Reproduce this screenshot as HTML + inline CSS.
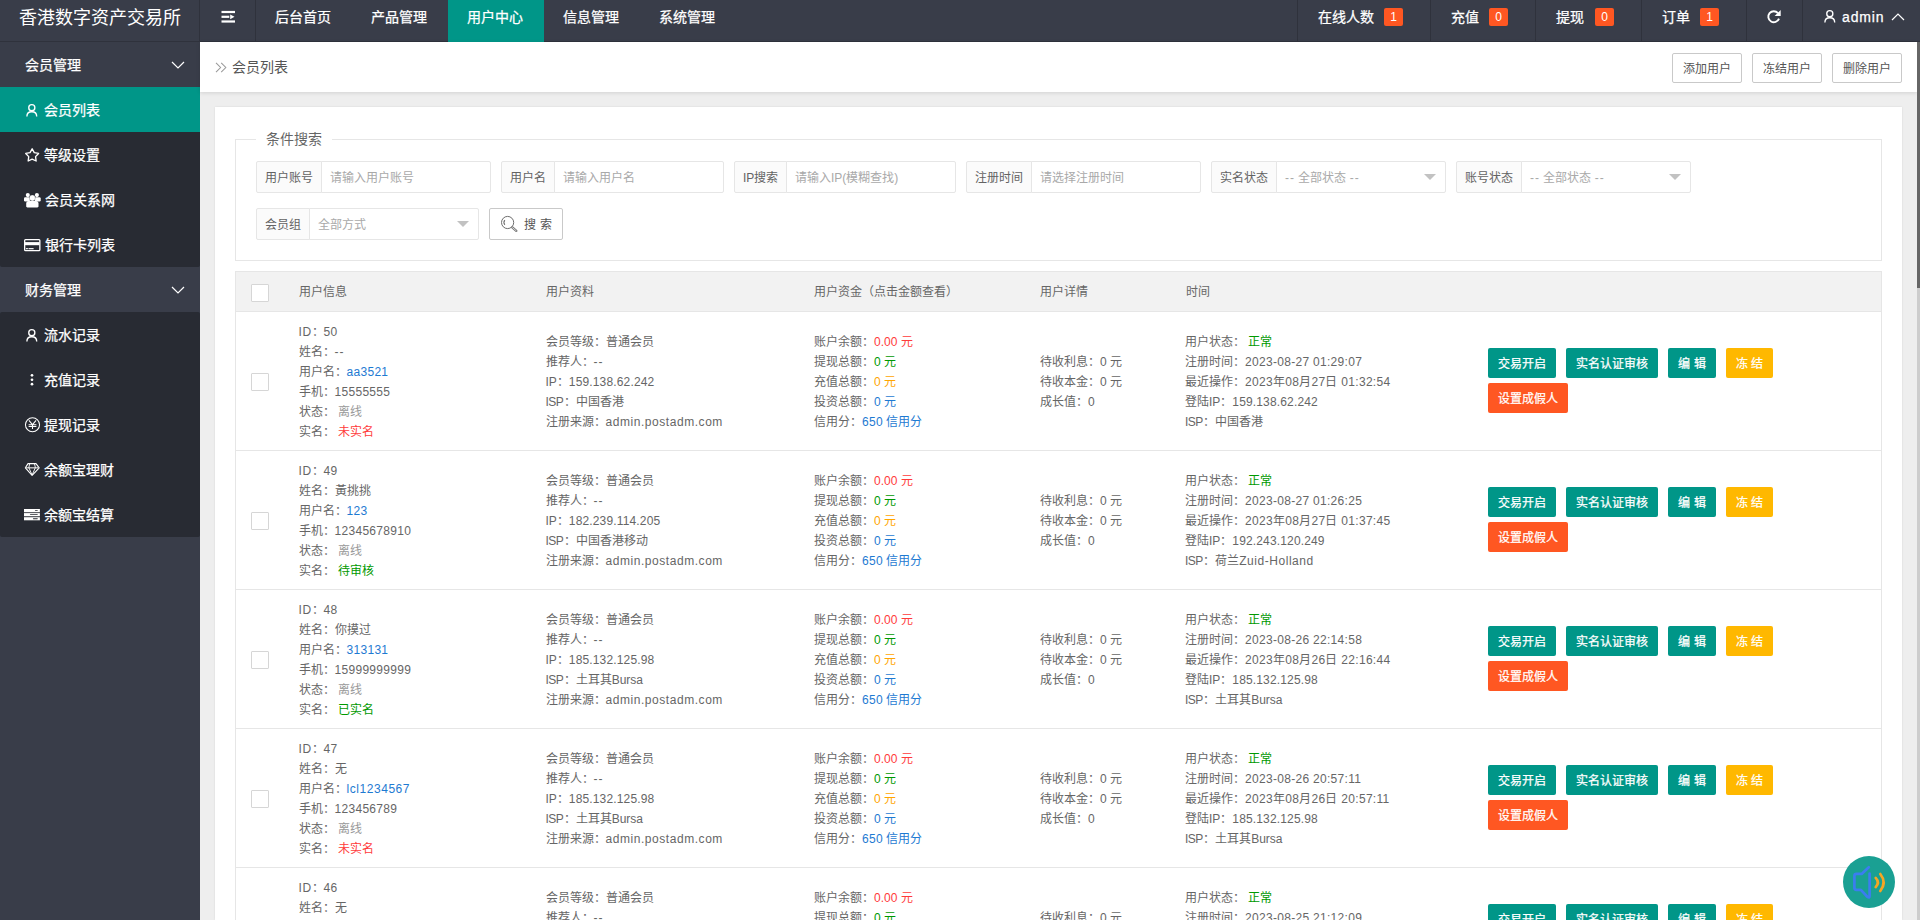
<!DOCTYPE html>
<html lang="zh-CN">
<head>
<meta charset="utf-8">
<title>会员列表</title>
<style>
*{box-sizing:border-box;margin:0;padding:0}
html,body{width:1920px;height:920px;overflow:hidden}
body{font-family:"Liberation Sans",sans-serif;font-size:14px;color:#666;background:#eee;position:relative;line-height:1}
a{text-decoration:none;color:inherit}
.abs,.ic{position:absolute}
.ic{display:block;overflow:visible}
#hd{position:absolute;left:0;top:0;width:1920px;height:42px;background:#393d49;border-bottom:1px solid #2f323c;color:#fff}
#hd .t{position:absolute;top:0;height:41px;line-height:35px;font-size:14px;white-space:nowrap;color:#fff}
#hd .dv{position:absolute;top:0;width:1px;height:41px;background:#2f323c}
#logo{position:absolute;left:0;top:0;width:199px;height:41px;line-height:36px;font-size:18px;text-align:center;color:#fff;white-space:nowrap}
.bdg{position:absolute;top:8px;width:19px;height:18px;line-height:18px;background:#ff5722;border-radius:2px;color:#fff;font-size:12px;text-align:center}
#sd{position:absolute;left:0;top:42px;width:200px;height:878px;background:#393d49}
#sd .g{position:absolute;left:0;width:200px;height:45px;line-height:47px;color:#fff;font-size:14px}
#sd .g span{position:absolute;left:25px;top:0;white-space:nowrap}
#sd .sub{position:absolute;left:0;width:200px;background:#282b33;border-radius:2px}
#sd .i{position:absolute;left:0;width:200px;height:45px;line-height:47px;color:#fff;font-size:14px}
#sd .i span{position:absolute;top:0;white-space:nowrap}
#sd .on{background:#009688}
#bar{position:absolute;left:200px;top:42px;width:1717px;height:50px;background:#fff;box-shadow:0 1px 4px rgba(0,0,0,.12)}
.btnp{position:absolute;height:30px;line-height:30px;border:1px solid #c9c9c9;border-radius:2px;background:#fff;color:#555;font-size:12px;text-align:center;white-space:nowrap}
#pn{position:absolute;left:215px;top:107px;width:1687px;height:813px;background:#fff;box-shadow:0 0 2px rgba(0,0,0,.1)}
#fs{position:absolute;left:20px;top:32px;width:1647px;height:122px;border:1px solid #e6e6e6}
#lg{position:absolute;left:20px;top:-10px;height:18px;line-height:18px;padding:0 10px;background:#fff;font-size:14px;color:#666;white-space:nowrap}
.fl{position:absolute;height:32px;line-height:32px;border:1px solid #e6e6e6;border-radius:2px 0 0 2px;background:#fbfbfb;color:#636363;font-size:12px;padding:0 8px;white-space:nowrap;overflow:hidden}
.fi{position:absolute;height:32px;line-height:32px;width:170px;border:1px solid #e6e6e6;border-radius:0 2px 2px 0;background:#fff;color:#a9a9a9;font-size:12px;padding:0 8px;white-space:nowrap;overflow:hidden}
.fi i{position:absolute;right:9px;top:12px;width:0;height:0;border:6px solid transparent;border-top-color:#c2c2c2}
#tb{position:absolute;left:20px;top:164px;width:1647px;height:660px;border:1px solid #e6e6e6;border-bottom:0}
#th{position:absolute;left:0;top:0;width:1645px;height:40px;background:#f2f2f2;border-bottom:1px solid #e6e6e6}
#th span{position:absolute;top:0;line-height:40px;font-size:12px;color:#666;white-space:nowrap}
.cb{position:absolute;left:15px;width:18px;height:18px;border:1px solid #d6d6d6;border-radius:1px;background:#fff}
.tr{position:absolute;left:0;width:1645px;height:139px;border-bottom:1px solid #e6e6e6;font-size:12px;color:#666}
.tr p{position:absolute;height:20px;line-height:20px;white-space:nowrap}
.n{letter-spacing:.3px}.n2{letter-spacing:.15px}.n3{letter-spacing:.55px}.n4{letter-spacing:-.6px;margin-right:.6px}.ds{letter-spacing:1px}
.r{color:#ff3b3b}.gn{color:#090}.or{color:#ffa500}.bl{color:#1e7ad2}.gy{color:#999}
.b{position:absolute;height:30px;line-height:32px;border-radius:2px;color:#fff;font-size:12px;text-align:center;white-space:nowrap}
.b1{background:#009688}.b2{background:#ffb800}.b3{background:#ff5722}
#sbt{position:absolute;left:1917px;top:42px;width:3px;height:878px;background:#cdcdcd}
#hd .t,#sd .g span,#sd .i span,.b{-webkit-text-stroke:.25px #fff}
#sb{position:absolute;left:1917px;top:42px;width:3px;height:246px;background:#666}
#fab{position:absolute;left:1843px;top:856px;width:52px;height:52px;border-radius:26px;background:#1aa093}
</style>
</head>
<body>
<div id="hd">
<div id="logo">香港数字资产交易所</div>
<div class="dv" style="left:199px"></div>
<svg class="ic" style="left:221px;top:10px" width="14" height="13" viewBox="0 0 14 13"><g fill="#fff"><rect x=".5" y=".9" width="13.500" height="2.200"/><rect x=".5" y="5.700" width="7.800" height="2.200"/><path d="M9.200 4.400l4.300 2.400-4.300 2.400z"/><rect x=".5" y="10.400" width="13.500" height="2.200"/></g></svg>
<div class="dv" style="left:255px"></div>
<div class="abs" style="left:448px;top:0;width:96px;height:42px;background:#009688"></div>
<a class="t" style="left:275px">后台首页</a>
<a class="t" style="left:371px">产品管理</a>
<a class="t" style="left:467px">用户中心</a>
<a class="t" style="left:563px">信息管理</a>
<a class="t" style="left:659px">系统管理</a>
<div class="dv" style="left:1297px"></div>
<div class="dv" style="left:1430px"></div>
<div class="dv" style="left:1535px"></div>
<div class="dv" style="left:1641px"></div>
<div class="dv" style="left:1746px"></div>
<div class="dv" style="left:1802px"></div>
<a class="t" style="left:1318px">在线人数</a><span class="bdg" style="left:1384px">1</span>
<a class="t" style="left:1451px">充值</a><span class="bdg" style="left:1489px">0</span>
<a class="t" style="left:1556px">提现</a><span class="bdg" style="left:1595px">0</span>
<a class="t" style="left:1662px">订单</a><span class="bdg" style="left:1700px">1</span>
<svg class="ic" style="left:1767px;top:9px" width="14" height="15" viewBox="0 0 14 15"><path d="M11.010 4.160A5.500 5.500 0 1 0 11.970 9.580" fill="none" stroke="#fff" stroke-width="1.900"/><path d="M13.700 1.100v5.900H7.600z" fill="#fff"/></svg>
<svg class="ic" style="left:1823.6px;top:10.2px" width="12" height="13" viewBox="0 0 12 13"><circle cx="5.800" cy="3.650" r="3.050" fill="none" stroke="#fff" stroke-width="1.350"/><path d="M0.900 12.500C0.900 9.400 3 7.750 5.800 7.750S10.700 9.400 10.700 12.500" fill="none" stroke="#fff" stroke-width="1.350"/></svg>
<a class="t" style="left:1842px;letter-spacing:.85px">admin</a>
<svg class="ic" style="left:1891px;top:12px" width="14" height="9" viewBox="0 0 14 9"><path d="M1 8l6-6 6 6" fill="none" stroke="#fff" stroke-width="1.200"/></svg>
</div>
<div id="sd">
<div class="g" style="top:0"><span>会员管理</span><svg class="ic" style="left:171px;top:19px" width="14" height="9" viewBox="0 0 14 9"><path d="M1 1l6 6 6-6" fill="none" stroke="#fff" stroke-width="1.200"/></svg></div>
<div class="sub" style="top:45px;height:180px"></div>
<div class="g" style="top:225px"><span>财务管理</span><svg class="ic" style="left:171px;top:19px" width="14" height="9" viewBox="0 0 14 9"><path d="M1 1l6 6 6-6" fill="none" stroke="#fff" stroke-width="1.200"/></svg></div>
<div class="sub" style="top:270px;height:225px"></div>
<a class="i on" style="top:45px"><svg class="ic" style="left:26.3px;top:16.5px" width="12" height="13" viewBox="0 0 12 13"><circle cx="5.800" cy="3.650" r="3.050" fill="none" stroke="#fff" stroke-width="1.350"/><path d="M0.900 12.500C0.900 9.400 3 7.750 5.800 7.750S10.700 9.400 10.700 12.500" fill="none" stroke="#fff" stroke-width="1.350"/></svg><span style="left:44px">会员列表</span></a>
<a class="i" style="top:90px"><svg class="ic" style="left:24.9px;top:15.8px" width="15" height="14" viewBox="0 0 15 14"><path d="M7.15 0.80 L9.27 4.64 L13.57 5.46 L10.57 8.66 L11.12 13.01 L7.15 11.15 L3.18 13.01 L3.73 8.66 L0.73 5.46 L5.03 4.64z" fill="none" stroke="#fff" stroke-width="1.350" stroke-linejoin="round"/></svg><span style="left:44px">等级设置</span></a>
<a class="i" style="top:135px"><svg class="ic" style="left:24.2px;top:15.7px" width="17" height="15" viewBox="0 0 17 15"><g fill="#fff"><circle cx="3.800" cy="2.100" r="2.050"/><circle cx="12.900" cy="2.100" r="2.050"/><rect x="0" y="4.300" width="5.900" height="4.100" rx="1.200"/><rect x="10.800" y="4.300" width="5.900" height="4.100" rx="1.200"/><circle cx="8.350" cy="5" r="3" stroke="#282b33" stroke-opacity=".6" stroke-width=".4"/><path d="M2.200 10.600c0-1.500 1-2.500 2.400-2.500h7.500c1.400 0 2.400 1 2.400 2.500v2.700c0 .7-.5 1.200-1.200 1.200H3.400c-.7 0-1.200-.5-1.200-1.200z"/></g></svg><span style="left:45px">会员关系网</span></a>
<a class="i" style="top:180px"><svg class="ic" style="left:24.4px;top:16.8px" width="17" height="13" viewBox="0 0 17 13"><rect x=".65" y=".65" width="15.200" height="10.900" rx=".9" fill="none" stroke="#fff" stroke-width="1.300"/><rect x="1" y="3.100" width="14.500" height="3.100" fill="#fff"/><rect x="1.900" y="9.100" width="2" height="1.150" fill="#fff"/><rect x="4.500" y="9.100" width="5.100" height="1.150" fill="#fff"/></svg><span style="left:45px">银行卡列表</span></a>
<a class="i" style="top:270px"><svg class="ic" style="left:26.3px;top:16.5px" width="12" height="13" viewBox="0 0 12 13"><circle cx="5.800" cy="3.650" r="3.050" fill="none" stroke="#fff" stroke-width="1.350"/><path d="M0.900 12.500C0.900 9.400 3 7.750 5.800 7.750S10.700 9.400 10.700 12.500" fill="none" stroke="#fff" stroke-width="1.350"/></svg><span style="left:44px">流水记录</span></a>
<a class="i" style="top:315px"><svg class="ic" style="left:30px;top:17px" width="4" height="13" viewBox="0 0 4 13"><g fill="#fff"><circle cx="2" cy="1.350" r="1.350"/><circle cx="2" cy="5.750" r="1.350"/><circle cx="2" cy="10.200" r="1.350"/></g></svg><span style="left:44px">充值记录</span></a>
<a class="i" style="top:360px"><svg class="ic" style="left:24.6px;top:15px" width="16" height="16" viewBox="0 0 16 16"><circle cx="7.500" cy="7.750" r="7.050" fill="none" stroke="#fff" stroke-width="1.050"/><path d="M3.900 3.400l3.600 4.200 3.600-4.200M7.500 7v5.100M3.600 7.700h7.800M3.600 9.500h7.800" fill="none" stroke="#fff" stroke-width="1.050"/></svg><span style="left:44px">提现记录</span></a>
<a class="i" style="top:405px"><svg class="ic" style="left:24.9px;top:16.1px" width="15" height="13" viewBox="0 0 15 13"><path d="M3 .650h8l3.200 4.150L7.100 12.300.4 4.800z" fill="none" stroke="#fff" stroke-width="1.100" stroke-linejoin="round"/><path d="M.6 4.800h13.400" fill="none" stroke="#d0d0d0" stroke-width="1.300"/><path d="M4.700 .9l-.9 3.700L7.100 12M9.500 .9l.9 3.700L7.100 12" fill="none" stroke="#fff" stroke-width=".9"/></svg><span style="left:44px">余额宝理财</span></a>
<a class="i" style="top:450px"><svg class="ic" style="left:24.1px;top:16.8px" width="16" height="12" viewBox="0 0 16 12"><g fill="#fff"><rect x="0" y="0" width="15.900" height="3.250"/><rect x="0" y="4.100" width="15.900" height="3.150"/><rect x="0" y="8.200" width="15.900" height="3.100"/></g><g fill="#282b33"><rect x="10.900" y="1.250" width="2.900" height=".8" rx=".4"/><rect x="5.900" y="5.300" width="7.900" height=".8" rx=".4"/><rect x="8.900" y="9.350" width="4.900" height=".8" rx=".4"/></g></svg><span style="left:44px">余额宝结算</span></a>
</div>
<div id="bar">
<svg class="ic" style="left:15px;top:20px" width="12" height="11" viewBox="0 0 12 11"><path d="M1 .8l4.600 4.700L1 10.200M6.200 .8l4.600 4.700-4.600 4.700" fill="none" stroke="#999" stroke-width="1.050"/></svg>
<span class="abs" style="left:32px;top:0;line-height:50px;font-size:14px;color:#555;white-space:nowrap">会员列表</span>
<a class="btnp" style="left:1472px;top:11px;width:70px">添加用户</a>
<a class="btnp" style="left:1552px;top:11px;width:70px">冻结用户</a>
<a class="btnp" style="left:1632px;top:11px;width:70px">删除用户</a>
</div>
<div id="pn">
<div id="fs">
<div id="lg">条件搜索</div>
<label class="fl" style="left:20px;top:21px;width:66px">用户账号</label><div class="fi" style="left:85px;top:21px">请输入用户账号</div>
<label class="fl" style="left:265px;top:21px;width:54px">用户名</label><div class="fi" style="left:318px;top:21px">请输入用户名</div>
<label class="fl" style="left:498px;top:21px;width:53px">IP搜索</label><div class="fi" style="left:550px;top:21px">请输入IP(模糊查找)</div>
<label class="fl" style="left:730px;top:21px;width:66px">注册时间</label><div class="fi" style="left:795px;top:21px">请选择注册时间</div>
<label class="fl" style="left:975px;top:21px;width:66px">实名状态</label><div class="fi" style="left:1040px;top:21px"><span class="ds">--</span> 全部状态 <span class="ds">--</span><i></i></div>
<label class="fl" style="left:1220px;top:21px;width:66px">账号状态</label><div class="fi" style="left:1285px;top:21px"><span class="ds">--</span> 全部状态 <span class="ds">--</span><i></i></div>
<label class="fl" style="left:20px;top:68px;width:54px">会员组</label><div class="fi" style="left:73px;top:68px">全部方式<i></i></div>
<a class="btnp" style="left:253px;top:68px;width:74px;height:32px;line-height:32px;padding-left:24px"><svg class="ic" style="left:10px;top:7px" width="18" height="17" viewBox="0 0 18 17"><circle cx="7.600" cy="6.500" r="6.100" fill="none" stroke="#6e6e6e" stroke-width="1"/><path d="M4.840 8.810A3.600 3.600 0 0 1 4.840 4.190" fill="none" stroke="#6e6e6e" stroke-width="1.050"/><path d="M12.300 11.400L16.300 14.900" stroke="#757575" stroke-width="2.300" stroke-linecap="round"/><path d="M12.500 11.600L16.100 14.700" stroke="#fff" stroke-width=".7" stroke-linecap="round"/></svg>搜 索</a>
</div>
<div id="tb">
<div id="th"><i class="cb" style="top:12px"></i><span style="left:62.5px">用户信息</span><span style="left:309.5px">用户资料</span><span style="left:578px">用户资金（点击金额查看）</span><span style="left:804px">用户详情</span><span style="left:949.5px">时间</span></div>
<div class="tr" style="top:40px"><i class="cb" style="top:61px"></i>
<p style="left:62.5px;top:10px"><span class="n3">ID</span>：<span class="n">50</span></p><p style="left:62.5px;top:30px">姓名：<span class="ds">--</span></p><p style="left:62.5px;top:50px">用户名：<a class="bl n">aa3521</a></p><p style="left:62.5px;top:70px">手机：<span class="n">15555555</span></p><p style="left:62.5px;top:90px">状态：&nbsp;<span class="gy">离线</span></p><p style="left:62.5px;top:110px">实名：&nbsp;<span class="r">未实名</span></p>
<p style="left:309.5px;top:20px">会员等级：普通会员</p><p style="left:309.5px;top:40px">推荐人：<span class="ds">--</span></p><p style="left:309.5px;top:60px">IP：<span class="n2">159.138.62.242</span></p><p style="left:309.5px;top:80px"><span class="n4">ISP</span>：中国香港</p><p style="left:309.5px;top:100px">注册来源：<span class="n3">admin.postadm.com</span></p>
<p style="left:578px;top:20px">账户余额：<a class="r">0.00 元</a></p><p style="left:578px;top:40px">提现总额：<a class="gn">0 元</a></p><p style="left:578px;top:60px">充值总额：<a class="or">0 元</a></p><p style="left:578px;top:80px">投资总额：<a class="bl">0 元</a></p><p style="left:578px;top:100px">信用分：<a class="bl"><span class="n">650</span> 信用分</a></p>
<p style="left:804px;top:40px">待收利息：0 元</p><p style="left:804px;top:60px">待收本金：0 元</p><p style="left:804px;top:80px">成长值：0</p>
<p style="left:949px;top:20px">用户状态：&nbsp;<span class="gn">正常</span></p><p style="left:949px;top:40px">注册时间：<span class="n">2023-08-27 01:29:07</span></p><p style="left:949px;top:60px">最近操作：<span class="n">2023年08月27日 01:32:54</span></p><p style="left:949px;top:80px">登陆IP：<span class="n2">159.138.62.242</span></p><p style="left:949px;top:100px"><span class="n4">ISP</span>：中国香港</p>
<a class="b b1" style="left:1252px;top:36px;width:68px">交易开启</a><a class="b b1" style="left:1330px;top:36px;width:92px">实名认证审核</a><a class="b b1" style="left:1432px;top:36px;width:48px">编 辑</a><a class="b b2" style="left:1490px;top:36px;width:47px">冻 结</a><a class="b b3" style="left:1252px;top:71px;width:80px">设置成假人</a>
</div>
<div class="tr" style="top:179px"><i class="cb" style="top:61px"></i>
<p style="left:62.5px;top:10px"><span class="n3">ID</span>：<span class="n">49</span></p><p style="left:62.5px;top:30px">姓名：黃挑挑</p><p style="left:62.5px;top:50px">用户名：<a class="bl n">123</a></p><p style="left:62.5px;top:70px">手机：<span class="n">12345678910</span></p><p style="left:62.5px;top:90px">状态：&nbsp;<span class="gy">离线</span></p><p style="left:62.5px;top:110px">实名：&nbsp;<span class="gn">待审核</span></p>
<p style="left:309.5px;top:20px">会员等级：普通会员</p><p style="left:309.5px;top:40px">推荐人：<span class="ds">--</span></p><p style="left:309.5px;top:60px">IP：<span class="n2">182.239.114.205</span></p><p style="left:309.5px;top:80px"><span class="n4">ISP</span>：中国香港移动</p><p style="left:309.5px;top:100px">注册来源：<span class="n3">admin.postadm.com</span></p>
<p style="left:578px;top:20px">账户余额：<a class="r">0.00 元</a></p><p style="left:578px;top:40px">提现总额：<a class="gn">0 元</a></p><p style="left:578px;top:60px">充值总额：<a class="or">0 元</a></p><p style="left:578px;top:80px">投资总额：<a class="bl">0 元</a></p><p style="left:578px;top:100px">信用分：<a class="bl"><span class="n">650</span> 信用分</a></p>
<p style="left:804px;top:40px">待收利息：0 元</p><p style="left:804px;top:60px">待收本金：0 元</p><p style="left:804px;top:80px">成长值：0</p>
<p style="left:949px;top:20px">用户状态：&nbsp;<span class="gn">正常</span></p><p style="left:949px;top:40px">注册时间：<span class="n">2023-08-27 01:26:25</span></p><p style="left:949px;top:60px">最近操作：<span class="n">2023年08月27日 01:37:45</span></p><p style="left:949px;top:80px">登陆IP：<span class="n2">192.243.120.249</span></p><p style="left:949px;top:100px"><span class="n4">ISP</span>：荷兰<span class="n3">Zuid-Holland</span></p>
<a class="b b1" style="left:1252px;top:36px;width:68px">交易开启</a><a class="b b1" style="left:1330px;top:36px;width:92px">实名认证审核</a><a class="b b1" style="left:1432px;top:36px;width:48px">编 辑</a><a class="b b2" style="left:1490px;top:36px;width:47px">冻 结</a><a class="b b3" style="left:1252px;top:71px;width:80px">设置成假人</a>
</div>
<div class="tr" style="top:318px"><i class="cb" style="top:61px"></i>
<p style="left:62.5px;top:10px"><span class="n3">ID</span>：<span class="n">48</span></p><p style="left:62.5px;top:30px">姓名：你摸过</p><p style="left:62.5px;top:50px">用户名：<a class="bl n">313131</a></p><p style="left:62.5px;top:70px">手机：<span class="n">15999999999</span></p><p style="left:62.5px;top:90px">状态：&nbsp;<span class="gy">离线</span></p><p style="left:62.5px;top:110px">实名：&nbsp;<span class="gn">已实名</span></p>
<p style="left:309.5px;top:20px">会员等级：普通会员</p><p style="left:309.5px;top:40px">推荐人：<span class="ds">--</span></p><p style="left:309.5px;top:60px">IP：<span class="n2">185.132.125.98</span></p><p style="left:309.5px;top:80px"><span class="n4">ISP</span>：土耳其Bursa</p><p style="left:309.5px;top:100px">注册来源：<span class="n3">admin.postadm.com</span></p>
<p style="left:578px;top:20px">账户余额：<a class="r">0.00 元</a></p><p style="left:578px;top:40px">提现总额：<a class="gn">0 元</a></p><p style="left:578px;top:60px">充值总额：<a class="or">0 元</a></p><p style="left:578px;top:80px">投资总额：<a class="bl">0 元</a></p><p style="left:578px;top:100px">信用分：<a class="bl"><span class="n">650</span> 信用分</a></p>
<p style="left:804px;top:40px">待收利息：0 元</p><p style="left:804px;top:60px">待收本金：0 元</p><p style="left:804px;top:80px">成长值：0</p>
<p style="left:949px;top:20px">用户状态：&nbsp;<span class="gn">正常</span></p><p style="left:949px;top:40px">注册时间：<span class="n">2023-08-26 22:14:58</span></p><p style="left:949px;top:60px">最近操作：<span class="n">2023年08月26日 22:16:44</span></p><p style="left:949px;top:80px">登陆IP：<span class="n2">185.132.125.98</span></p><p style="left:949px;top:100px"><span class="n4">ISP</span>：土耳其Bursa</p>
<a class="b b1" style="left:1252px;top:36px;width:68px">交易开启</a><a class="b b1" style="left:1330px;top:36px;width:92px">实名认证审核</a><a class="b b1" style="left:1432px;top:36px;width:48px">编 辑</a><a class="b b2" style="left:1490px;top:36px;width:47px">冻 结</a><a class="b b3" style="left:1252px;top:71px;width:80px">设置成假人</a>
</div>
<div class="tr" style="top:457px"><i class="cb" style="top:61px"></i>
<p style="left:62.5px;top:10px"><span class="n3">ID</span>：<span class="n">47</span></p><p style="left:62.5px;top:30px">姓名：无</p><p style="left:62.5px;top:50px">用户名：<a class="bl n3">lcl1234567</a></p><p style="left:62.5px;top:70px">手机：<span class="n">123456789</span></p><p style="left:62.5px;top:90px">状态：&nbsp;<span class="gy">离线</span></p><p style="left:62.5px;top:110px">实名：&nbsp;<span class="r">未实名</span></p>
<p style="left:309.5px;top:20px">会员等级：普通会员</p><p style="left:309.5px;top:40px">推荐人：<span class="ds">--</span></p><p style="left:309.5px;top:60px">IP：<span class="n2">185.132.125.98</span></p><p style="left:309.5px;top:80px"><span class="n4">ISP</span>：土耳其Bursa</p><p style="left:309.5px;top:100px">注册来源：<span class="n3">admin.postadm.com</span></p>
<p style="left:578px;top:20px">账户余额：<a class="r">0.00 元</a></p><p style="left:578px;top:40px">提现总额：<a class="gn">0 元</a></p><p style="left:578px;top:60px">充值总额：<a class="or">0 元</a></p><p style="left:578px;top:80px">投资总额：<a class="bl">0 元</a></p><p style="left:578px;top:100px">信用分：<a class="bl"><span class="n">650</span> 信用分</a></p>
<p style="left:804px;top:40px">待收利息：0 元</p><p style="left:804px;top:60px">待收本金：0 元</p><p style="left:804px;top:80px">成长值：0</p>
<p style="left:949px;top:20px">用户状态：&nbsp;<span class="gn">正常</span></p><p style="left:949px;top:40px">注册时间：<span class="n">2023-08-26 20:57:11</span></p><p style="left:949px;top:60px">最近操作：<span class="n">2023年08月26日 20:57:11</span></p><p style="left:949px;top:80px">登陆IP：<span class="n2">185.132.125.98</span></p><p style="left:949px;top:100px"><span class="n4">ISP</span>：土耳其Bursa</p>
<a class="b b1" style="left:1252px;top:36px;width:68px">交易开启</a><a class="b b1" style="left:1330px;top:36px;width:92px">实名认证审核</a><a class="b b1" style="left:1432px;top:36px;width:48px">编 辑</a><a class="b b2" style="left:1490px;top:36px;width:47px">冻 结</a><a class="b b3" style="left:1252px;top:71px;width:80px">设置成假人</a>
</div>
<div class="tr" style="top:596px"><i class="cb" style="top:61px"></i>
<p style="left:62.5px;top:10px"><span class="n3">ID</span>：<span class="n">46</span></p><p style="left:62.5px;top:30px">姓名：无</p><p style="left:62.5px;top:50px">用户名：<a class="bl n3">lcl123456</a></p><p style="left:62.5px;top:70px">手机：<span class="n">12345678</span></p><p style="left:62.5px;top:90px">状态：&nbsp;<span class="gy">离线</span></p><p style="left:62.5px;top:110px">实名：&nbsp;<span class="r">未实名</span></p>
<p style="left:309.5px;top:20px">会员等级：普通会员</p><p style="left:309.5px;top:40px">推荐人：<span class="ds">--</span></p><p style="left:309.5px;top:60px">IP：<span class="n2">185.132.125.98</span></p><p style="left:309.5px;top:80px"><span class="n4">ISP</span>：土耳其Bursa</p><p style="left:309.5px;top:100px">注册来源：<span class="n3">admin.postadm.com</span></p>
<p style="left:578px;top:20px">账户余额：<a class="r">0.00 元</a></p><p style="left:578px;top:40px">提现总额：<a class="gn">0 元</a></p><p style="left:578px;top:60px">充值总额：<a class="or">0 元</a></p><p style="left:578px;top:80px">投资总额：<a class="bl">0 元</a></p><p style="left:578px;top:100px">信用分：<a class="bl"><span class="n">650</span> 信用分</a></p>
<p style="left:804px;top:40px">待收利息：0 元</p><p style="left:804px;top:60px">待收本金：0 元</p><p style="left:804px;top:80px">成长值：0</p>
<p style="left:949px;top:20px">用户状态：&nbsp;<span class="gn">正常</span></p><p style="left:949px;top:40px">注册时间：<span class="n">2023-08-25 21:12:09</span></p><p style="left:949px;top:60px">最近操作：<span class="n">2023年08月25日 21:12:09</span></p><p style="left:949px;top:80px">登陆IP：<span class="n2">185.132.125.98</span></p><p style="left:949px;top:100px"><span class="n4">ISP</span>：土耳其Bursa</p>
<a class="b b1" style="left:1252px;top:36px;width:68px">交易开启</a><a class="b b1" style="left:1330px;top:36px;width:92px">实名认证审核</a><a class="b b1" style="left:1432px;top:36px;width:48px">编 辑</a><a class="b b2" style="left:1490px;top:36px;width:47px">冻 结</a><a class="b b3" style="left:1252px;top:71px;width:80px">设置成假人</a>
</div>
</div>
</div>
<div id="sbt"></div><div id="sb"></div>
<div id="fab"><svg class="ic" style="left:0;top:0" width="52" height="52" viewBox="0 0 52 52"><path d="M25.800 11.200L18.600 17.900H13.500Q11.400 17.900 11.400 20V31.800Q11.400 33.900 13.500 33.900H17.900L24.300 40.700Q26.600 42.600 26.600 39.800V17.600" fill="none" stroke="#3b7df0" stroke-width="2.700" stroke-linecap="round" stroke-linejoin="round"/><path d="M32.700 21.900Q37 26.500 32.700 31.100" fill="none" stroke="#f5a623" stroke-width="2.700" stroke-linecap="round"/><path d="M37.300 18Q44 26.500 37.300 35" fill="none" stroke="#f5a623" stroke-width="2.700" stroke-linecap="round"/></svg></div>
</body>
</html>
